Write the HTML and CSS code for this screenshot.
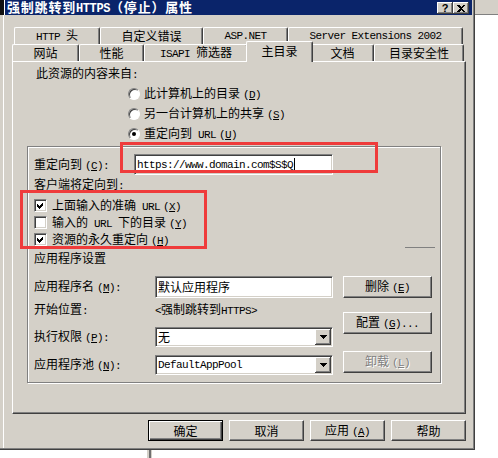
FILE: index.html
```html
<!DOCTYPE html>
<html lang="zh-CN">
<head>
  <meta charset="UTF-8" />
  <title>强制跳转到HTTPS (停止) 属性</title>
  <link rel="stylesheet" href="styles.css">
</head>
<body>
  <div class="screen">
    <div class="window">
      <div class="titlebar">
        <div class="edge"></div>
        <div class="bar">
          <span class="title">强制跳转到<span class="en-b">HTTPS</span>（停止）属性</span>
          <div class="title-btns">
            <span class="tbtn">?</span>
            <span class="tbtn">
              <svg width="8" height="7" viewBox="0 0 8 7" shape-rendering="crispEdges"><path d="M0 0h2l2 2 2-2h2L5 3.5 8 7H6L4 5 2 7H0l3-3.5z" fill="#000"/></svg>
            </span>
          </div>
        </div>
      </div>

      <div class="tabs">
        <div class="tab-row back">
          <div class="tab w86"><span><span class="en">HTTP </span>头</span></div>
          <div class="tab w103"><span>自定义错误</span></div>
          <div class="tab w85"><span class="en">ASP.NET</span></div>
          <div class="tab w175"><span class="en">Server Extensions 2002</span></div>
        </div>
        <div class="tab-row front">
          <div class="tab w67"><span>网站</span></div>
          <div class="tab w65"><span>性能</span></div>
          <div class="tab w104"><span><span class="en">ISAPI </span>筛选器</span></div>
          <div class="tab active"><span>主目录</span></div>
          <div class="tab w63"><span>文档</span></div>
          <div class="tab w90"><span>目录安全性</span></div>
        </div>
      </div>

      <div class="panel">
        <div class="source">此资源的内容来自<span class="en">:</span></div>
        <div class="radios">
          <div class="opt-row"><span class="rb"></span><span>此计算机上的目录<span class="en mn">(<u>D</u>)</span></span></div>
          <div class="opt-row"><span class="rb"></span><span>另一台计算机上的共享<span class="en mn">(<u>S</u>)</span></span></div>
          <div class="opt-row"><span class="rb"><span class="dot"></span></span><span>重定向到<span class="en"> URL</span><span class="en mn">(<u>U</u>)</span></span></div>
        </div>

        <div class="group">
          <div class="redirect-row">
            <span class="redirect-label">重定向到<span class="en mn">(<u>C</u>):</span></span>
            <div class="field url"><span class="en">https://www.domain.com$S$Q</span><span class="caret"></span></div>
          </div>
          <div class="client-label">客户端将定向到<span class="en">:</span></div>
          <div class="checks">
            <div class="opt-row check-row"><span class="cb"><svg width="7" height="7" viewBox="0 0 7 7" shape-rendering="crispEdges"><path d="M6 0v3L2 7 0 5V2l2 2z" fill="#000"/></svg></span><span>上面输入的准确<span class="en"> URL</span><span class="en mn">(<u>X</u>)</span></span></div>
            <div class="opt-row check-row"><span class="cb"></span><span>输入的<span class="en"> URL </span>下的目录<span class="en mn">(<u>Y</u>)</span></span></div>
            <div class="opt-row check-row"><span class="cb"><svg width="7" height="7" viewBox="0 0 7 7" shape-rendering="crispEdges"><path d="M6 0v3L2 7 0 5V2l2 2z" fill="#000"/></svg></span><span>资源的永久重定向<span class="en mn">(<u>H</u>)</span></span></div>
          </div>
          <div class="sep"></div>
          <div class="app-title">应用程序设置</div>

          <div class="app">
            <div class="app-fields">
              <div class="app-row r1">
                <span class="app-label">应用程序名<span class="en mn">(<u>M</u>):</span></span>
                <div class="field"><span>默认应用程序</span></div>
              </div>
              <div class="app-row r2">
                <span class="app-label">开始位置<span class="en">:</span></span>
                <span class="app-value"><span class="en">&lt;</span>强制跳转到<span class="en">HTTPS&gt;</span></span>
              </div>
              <div class="app-row r3">
                <span class="app-label">执行权限<span class="en mn">(<u>P</u>):</span></span>
                <div class="field select"><span>无</span><span class="drop"><svg width="7" height="4" viewBox="0 0 7 4" shape-rendering="crispEdges"><path d="M0 0h7L3.5 4z" fill="#000"/></svg></span></div>
              </div>
              <div class="app-row r4">
                <span class="app-label">应用程序池<span class="en mn">(<u>N</u>):</span></span>
                <div class="field select"><span class="en">DefaultAppPool</span><span class="drop"><svg width="7" height="4" viewBox="0 0 7 4" shape-rendering="crispEdges"><path d="M0 0h7L3.5 4z" fill="#000"/></svg></span></div>
              </div>
            </div>
            <div class="app-btns">
              <div class="btn"><span>删除<span class="en mn">(<u>E</u>)</span></span></div>
              <div class="btn b2"><span>配置<span class="en mn">(<u>G</u>)...</span></span></div>
              <div class="btn b3 disabled"><span>卸载<span class="en mn">(<u>L</u>)</span></span></div>
            </div>
          </div>
        </div>
      </div>

      <div class="dlg-buttons">
        <div class="btn default"><span>确定</span></div>
        <div class="btn"><span>取消</span></div>
        <div class="btn"><span>应用<span class="en mn">(<u>A</u>)</span></span></div>
        <div class="btn"><span>帮助</span></div>
      </div>

      <div class="mark mark-url"></div>
      <div class="mark mark-opts"></div>
    </div>
    <div class="side"><div class="side-top"></div></div>
  </div>
  <div class="behind"></div>
</body>
</html>
```

FILE: styles.css
```css
* {
  box-sizing: border-box;
  margin: 0;
  padding: 0;
}
body {
  background: #fff;
  color: #000;
  font-family: "Noto Sans CJK SC", sans-serif;
  font-size: 12px;
  line-height: 16px;
  width: 498px;
  height: 458px;
  overflow: hidden;
}
.en {
  font-family: "Liberation Mono", "Noto Sans CJK SC", monospace;
  font-size: 11px;
  letter-spacing: -0.6px;
  white-space: pre;
}
.mn {
  margin-left: 3px;
}
u {
  text-decoration: underline;
  text-underline-offset: 1px;
}
.screen {
  display: flex;
}
.window {
  position: relative;
  width: 475px;
  height: 450px;
  background: #d4d0c8;
  box-shadow: inset -1px -1px #404040, inset -2px -2px #808080, inset 3px 0 #d4d0c8, inset 4px 0 #fff;
}

/* title bar */
.titlebar {
  display: flex;
  height: 15px;
  margin-right: 3px;
}
.edge {
  width: 5px;
  background: #111;
  border-right: 1px solid #fff;
}
.bar {
  flex: 1;
  display: flex;
  align-items: center;
  background: #0a246a;
  padding: 1px 0 0 2px;
}
.title {
  color: #fff;
  font-weight: bold;
  font-size: 13px;
  line-height: 14px;
  letter-spacing: 0.8px;
  white-space: nowrap;
}
.en-b {
  font-family: "Liberation Mono", monospace;
  font-weight: bold;
  font-size: 12px;
  letter-spacing: -0.4px;
}
.title-btns {
  display: flex;
  margin-left: auto;
  margin-right: 3px;
  align-self: flex-start;
  margin-top: 1px;
}
.tbtn {
  width: 16px;
  height: 12px;
  display: flex;
  align-items: center;
  justify-content: center;
  background: #d4d0c8;
  box-shadow: inset -1px -1px #404040, inset 1px 1px #fff, inset -2px -2px #808080;
  font: bold 11px "Liberation Sans", sans-serif;
}

/* tabs */
.tabs {
  margin: 12px 0 0 12px;
  width: 454px;
}
.tab-row {
  display: flex;
  height: 17px;
}
.tab-row.back {
  margin-left: 2px;
}
.tab-row.front {
  align-items: flex-end;
  position: relative;
  z-index: 1;
}
.tab {
  height: 17px;
  display: flex;
  align-items: center;
  justify-content: center;
  white-space: nowrap;
  background: #d4d0c8;
  border-top: 1px solid #fff;
  border-left: 1px solid #fff;
  border-right: 1px solid #404040;
  border-radius: 2px 2px 0 0;
  box-shadow: inset -1px 0 #808080;
}
.w63 { width: 63px; }
.w65 { width: 65px; }
.w67 { width: 67px; }
.w85 { width: 85px; }
.w86 { width: 86px; }
.w90 { width: 90px; }
.w103 { width: 103px; }
.w104 { width: 104px; }
.w175 { width: 175px; }
.tab.active {
  width: 67px;
  height: 21px;
  margin: 0 -2px -1px;
  padding-bottom: 2px;
  position: relative;
  z-index: 2;
}

/* main panel */
.panel {
  margin-left: 12px;
  width: 454px;
  height: 353px;
  border: 1px solid;
  border-color: #fff #404040 #404040 #fff;
  box-shadow: inset -1px -1px #808080;
}
.source {
  margin: 3px 0 0 23px;
}
.radios {
  margin: 1px 0 0 115px;
}
.opt-row {
  display: flex;
  align-items: center;
  height: 20px;
  white-space: nowrap;
}
.rb {
  width: 12px;
  height: 12px;
  margin-right: 4px;
  border-radius: 50%;
  background: #fff;
  border: 1px solid;
  border-color: #808080 #fff #fff #808080;
  box-shadow: inset 1px 1px #404040;
  display: flex;
  align-items: center;
  justify-content: center;
}
.dot {
  width: 4px;
  height: 4px;
  border-radius: 50%;
  background: #000;
}

.group {
  margin: 2px 0 0 14px;
  width: 414px;
  height: 237px;
  border: 1px solid #808080;
  box-shadow: inset 1px 1px #fff, 1px 1px #fff;
}
.redirect-row {
  display: flex;
  align-items: center;
  height: 21px;
  margin: 7px 0 0 6px;
}
.redirect-label {
  width: 100px;
}
.field {
  height: 21px;
  display: flex;
  align-items: center;
  padding-left: 2px;
  background: #fff;
  border: 1px solid;
  border-color: #808080 #fff #fff #808080;
  box-shadow: inset 1px 1px #404040, inset -1px -1px #d4d0c8;
  white-space: nowrap;
}
.field.url {
  width: 199px;
}
.caret {
  width: 1px;
  height: 13px;
  background: #000;
  margin-left: 1px;
}
.client-label {
  margin: 1px 0 0 6px;
}
.checks {
  margin: 3px 0 0 6px;
}
.check-row {
  height: 17px;
}
.cb {
  width: 13px;
  height: 13px;
  margin-right: 5px;
  background: #fff;
  border: 1px solid;
  border-color: #808080 #fff #fff #808080;
  box-shadow: inset 1px 1px #404040, inset -1px -1px #d4d0c8;
  display: flex;
  align-items: center;
  justify-content: center;
}
.sep {
  margin: -1px 0 0 377px;
  width: 30px;
  height: 1px;
  background: #808080;
}
.app-title {
  margin: 2px 0 0 6px;
}

/* application settings */
.app {
  display: flex;
  gap: 10px;
  margin: 10px 0 0 6px;
}
.app-row {
  display: flex;
  align-items: center;
}
.app-label {
  width: 121px;
  white-space: nowrap;
}
.app-row .field {
  width: 178px;
}
.r1 { height: 22px; }
.r1 .field { height: 22px; }
.r2 { height: 18px; margin-top: 3px; }
.r3 { height: 20px; margin-top: 8px; }
.r4 { height: 20px; margin-top: 8px; }
.select {
  height: 20px;
}
.drop {
  width: 16px;
  height: 16px;
  margin-left: auto;
  margin-right: 1px;
  display: flex;
  align-items: center;
  justify-content: center;
  background: #d4d0c8;
  box-shadow: inset -1px -1px #404040, inset 1px 1px #fff, inset -2px -2px #808080;
}
.app-value {
  white-space: nowrap;
}
.app-btns {
  display: flex;
  flex-direction: column;
}
.app-btns .btn {
  width: 89px;
  height: 22px;
}
.app-btns .b2 { margin-top: 14px; }
.app-btns .b3 { margin-top: 17px; }

/* buttons */
.btn {
  width: 75px;
  height: 21px;
  display: flex;
  align-items: center;
  justify-content: center;
  white-space: nowrap;
  background: #d4d0c8;
  border: 1px solid;
  border-color: #fff #404040 #404040 #fff;
  box-shadow: inset -1px -1px #808080;
}
.btn.default {
  border-color: #000;
  box-shadow: inset 1px 1px #fff, inset -1px -1px #404040, inset -2px -2px #808080;
}
.btn.disabled {
  color: #808080;
  text-shadow: 1px 1px #fff;
}
.dlg-buttons {
  display: flex;
  justify-content: flex-end;
  gap: 6px;
  margin-top: 6px;
  padding-right: 9px;
}

/* red annotation boxes */
.mark {
  position: absolute;
  border: 3px solid #ef3b3b;
}
.mark-url {
  left: 120px;
  top: 142px;
  width: 258px;
  height: 31px;
}
.mark-opts {
  left: 20px;
  top: 190px;
  width: 187px;
  height: 59px;
}

.side {
  width: 23px;
}
.side-top {
  height: 15px;
  background: #d4d0c8;
  border-bottom: 1px solid #808080;
}
.behind {
  margin-left: 147px;
  width: 5px;
  height: 8px;
  border-left: 2px solid #d4d0c8;
  border-right: 1px solid #d4d0c8;
  background: #707070;
}
```
